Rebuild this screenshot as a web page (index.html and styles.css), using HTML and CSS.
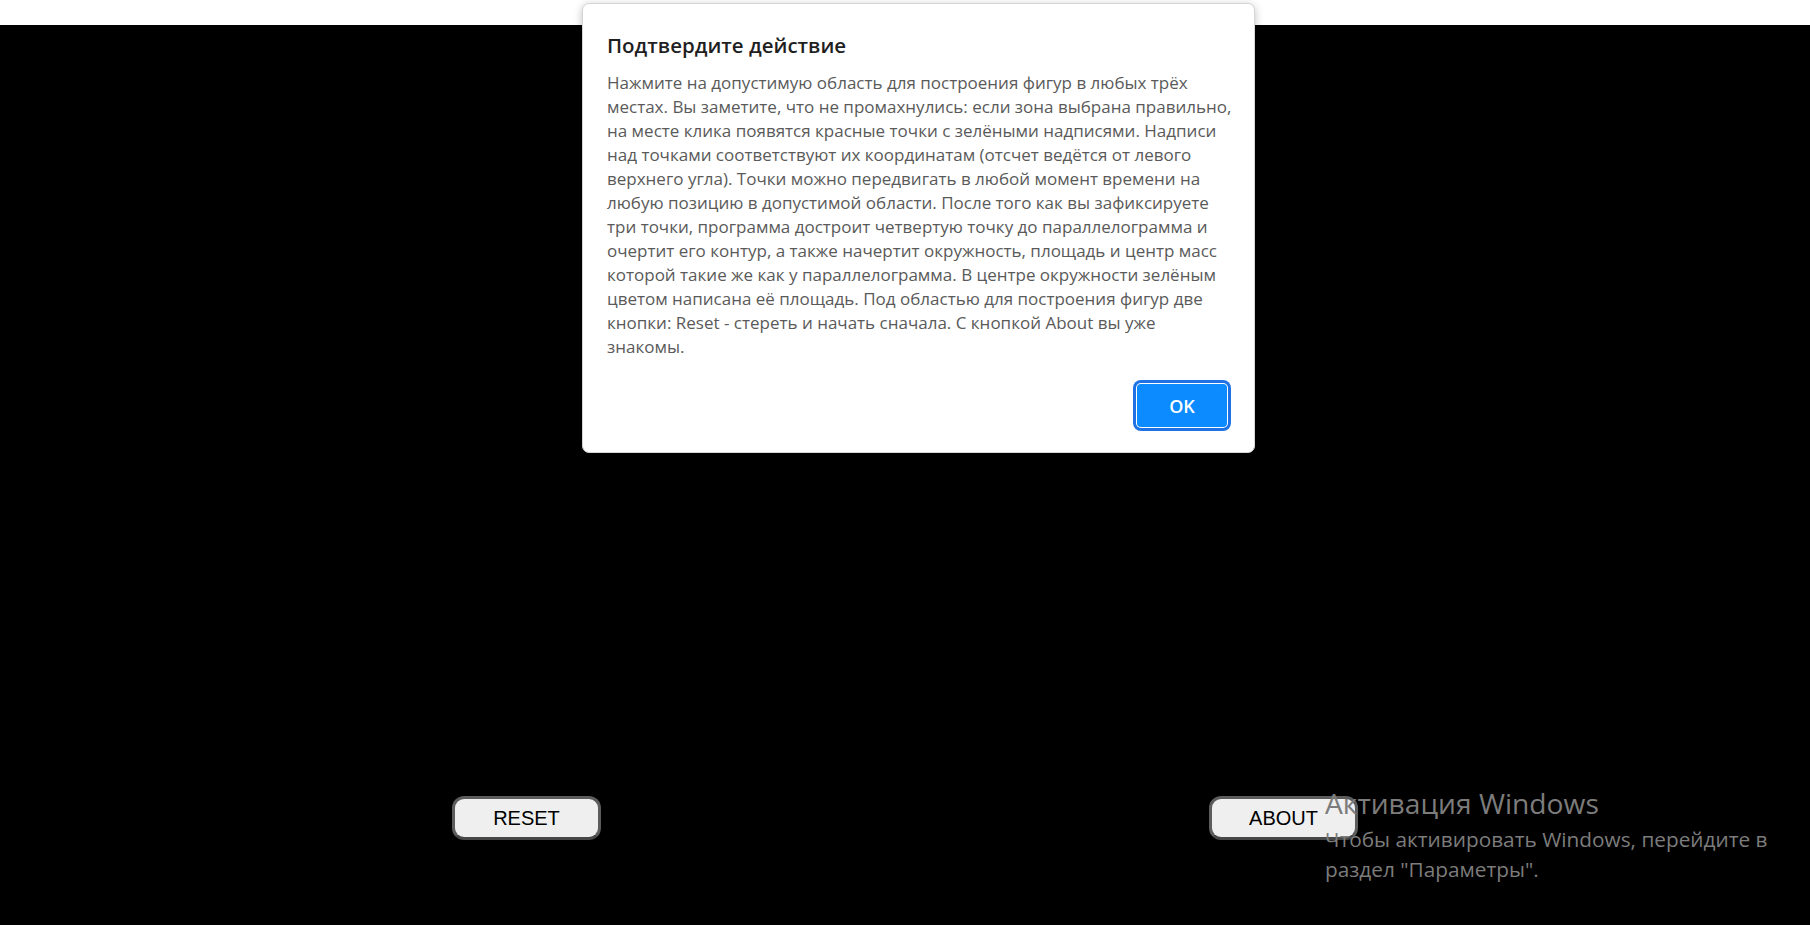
FILE: index.html
```html
<!DOCTYPE html>
<html lang="ru">
<head>
<meta charset="utf-8">
<title>Параллелограмм</title>
<link rel="stylesheet" href="styles.css">
</head>
<body>
  <div class="topbar"></div>
  <main class="stage"></main>
  <div class="controls">
    <button class="ctrl-btn" type="button">RESET</button>
    <button class="ctrl-btn" type="button">ABOUT</button>
  </div>

  <div class="dialog" role="dialog">
    <h2 class="dialog-title">Подтвердите действие</h2>
    <p class="dialog-text">Нажмите на допустимую область для построения фигур в любых трёх<br>местах. Вы заметите, что не промахнулись: если зона выбрана правильно,<br>на месте клика появятся красные точки с зелёными надписями. Надписи<br>над точками соответствуют их координатам (отсчет ведётся от левого<br>верхнего угла). Точки можно передвигать в любой момент времени на<br>любую позицию в допустимой области. После того как вы зафиксируете<br>три точки, программа достроит четвертую точку до параллелограмма и<br>очертит его контур, а также начертит окружность, площадь и центр масс<br>которой такие же как у параллелограмма. В центре окружности зелёным<br>цветом написана её площадь. Под областью для построения фигур две<br>кнопки: Reset - стереть и начать сначала. С кнопкой About вы уже<br>знакомы.</p>
    <div class="dialog-footer">
      <button class="ok-btn" type="button">OK</button>
    </div>
  </div>

  <div class="watermark">
    <div class="wm-title">Активация Windows</div>
    <div class="wm-text">Чтобы активировать Windows, перейдите в<br>раздел "Параметры".</div>
  </div>
</body>
</html>
```
FILE: styles.css
```css
html, body {
  margin: 0;
  padding: 0;
}
body {
  background: #000;
  font-family: "Open Sans", "Noto Sans", sans-serif;
  height: 925px;
  overflow: hidden;
}
.topbar {
  height: 25px;
  background: #fff;
}
.stage {
  display: block;
  height: 771px;
  background: #000;
}
.controls {
  width: 906px;
  margin: 0 auto;
  display: flex;
  justify-content: space-between;
}
.ctrl-btn {
  box-sizing: border-box;
  width: 149px;
  height: 44px;
  background: #efefef;
  border: 3px solid #5c5c5c;
  border-bottom-color: #474747;
  border-radius: 12px;
  font-family: "Liberation Sans", Arial, sans-serif;
  font-size: 20px;
  color: #000;
  padding: 0;
  line-height: 38px;
}

.dialog {
  position: absolute;
  left: 582px;
  top: 3px;
  box-sizing: border-box;
  width: 673px;
  background: #fff;
  border: 1px solid #d6d6d6;
  border-radius: 7px;
  box-shadow: 0 2px 8px rgba(0, 0, 0, 0.25);
  padding: 27px 27px 25px 24px;
}
.dialog-title {
  margin: 0 0 12px;
  font-size: 20.5px;
  line-height: 28px;
  font-weight: 600;
  color: #1f1f1f;
}
.dialog-text {
  margin: 0;
  font-size: 17px;
  line-height: 24px;
  color: #5a5a5a;
  white-space: nowrap;
}
.dialog-footer {
  margin-top: 25px;
  display: flex;
  justify-content: flex-end;
}
.ok-btn {
  width: 90px;
  height: 43px;
  border: none;
  border-radius: 4px;
  background: #0b8bff;
  color: #fff;
  font-family: "Open Sans", "Noto Sans", sans-serif;
  font-size: 18px;
  font-weight: 600;
  padding: 0;
  box-shadow: 0 0 0 1px #fff, 0 0 0 4px #1f72e6;
}

.watermark {
  position: absolute;
  left: 1325px;
  top: 785px;
  color: #7c7c7c;
  font-family: "Open Sans", "Noto Sans", sans-serif;
  white-space: nowrap;
}
.wm-title {
  font-size: 28.2px;
  line-height: 37px;
  margin-bottom: 2px;
}
.wm-text {
  font-size: 20.8px;
  line-height: 30px;
}
```
